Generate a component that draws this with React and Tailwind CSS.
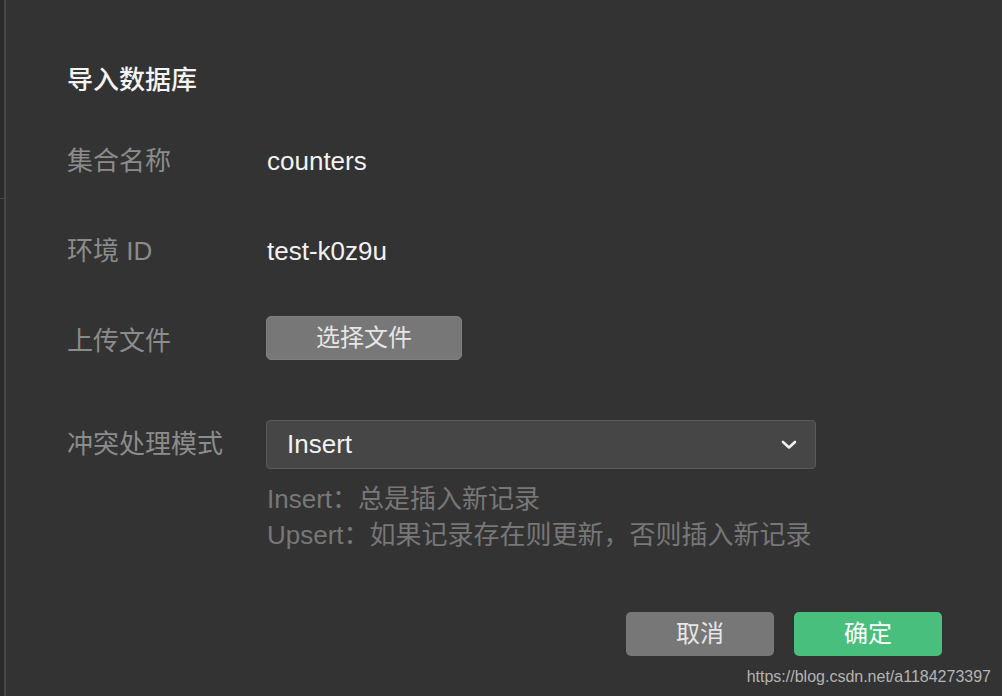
import React from 'react';

const font = { fontFamily: '"Liberation Sans", "Noto Sans CJK SC", sans-serif' };

const Chevron = () => (
  <svg width="16" height="10" viewBox="0 0 16 10" fill="none">
    <path d="M2 2 L8 7.5 L14 2" stroke="#f2f2f2" strokeWidth="2.6" strokeLinecap="round" strokeLinejoin="round" />
  </svg>
);

const App = () => {
  return (
    <div
      className="relative flex h-[696px] w-[1002px] overflow-hidden bg-[#333333]"
      style={font}
    >
      <div className="flex w-[6px] flex-col border-r-[2px] border-[#474747] bg-[#2b2b2b]">
        <div className="h-[198px]" />
        <div className="h-[1px] bg-[#474747]" />
      </div>

      <div className="flex flex-1 flex-col pl-[61px] pr-[60px] pt-[62px]">
        <h1 className="text-[26px] font-medium leading-[36px] text-[#f4f4f4]">导入数据库</h1>

        <div className="mt-[41px] flex h-[44px] items-center">
          <div className="w-[200px] text-[26px] text-[#8c8c8c]">集合名称</div>
          <div className="text-[26px] text-[#f2f2f2]">counters</div>
        </div>

        <div className="mt-[46px] flex h-[44px] items-center">
          <div className="w-[200px] text-[26px] text-[#8c8c8c]">环境 ID</div>
          <div className="text-[26px] text-[#f2f2f2]">test-k0z9u</div>
        </div>

        <div className="mt-[43px] flex h-[44px] items-center">
          <div className="mt-[6px] w-[199px] text-[26px] text-[#8c8c8c]">上传文件</div>
          <button className="h-[44px] w-[196px] rounded-[5px] border border-[#7e7e7e] bg-[#777777] text-[24px] text-[#e6e6e6]">
            选择文件
          </button>
        </div>

        <div className="mt-[60px] flex h-[49px] items-center">
          <div className="w-[199px] text-[26px] text-[#8c8c8c]">冲突处理模式</div>
          <div className="flex h-[49px] w-[550px] items-center justify-between rounded-[4px] border border-[#5a5a5a] bg-[#464646] pl-[20px] pr-[18px]">
            <span className="text-[26px] text-[#f2f2f2]">Insert</span>
            <Chevron />
          </div>
        </div>

        <div className="ml-[200px] mt-[12px] text-[26px] leading-[36px] text-[#777777]">
          <div>Insert：总是插入新记录</div>
          <div>Upsert：如果记录存在则更新，否则插入新记录</div>
        </div>

        <div className="mt-[59px] flex justify-end gap-[20px]">
          <button className="h-[44px] w-[148px] rounded-[5px] bg-[#777777] text-[24px] text-[#e6e6e6]">
            取消
          </button>
          <button className="h-[44px] w-[148px] rounded-[5px] bg-[#48bf7c] text-[24px] text-white">
            确定
          </button>
        </div>
      </div>

      <div className="absolute bottom-[8px] right-[11px] text-[16px] leading-[22px] text-[#b4b4b4]">
        https://blog.csdn.net/a1184273397
      </div>
    </div>
  );
};

export default App;
